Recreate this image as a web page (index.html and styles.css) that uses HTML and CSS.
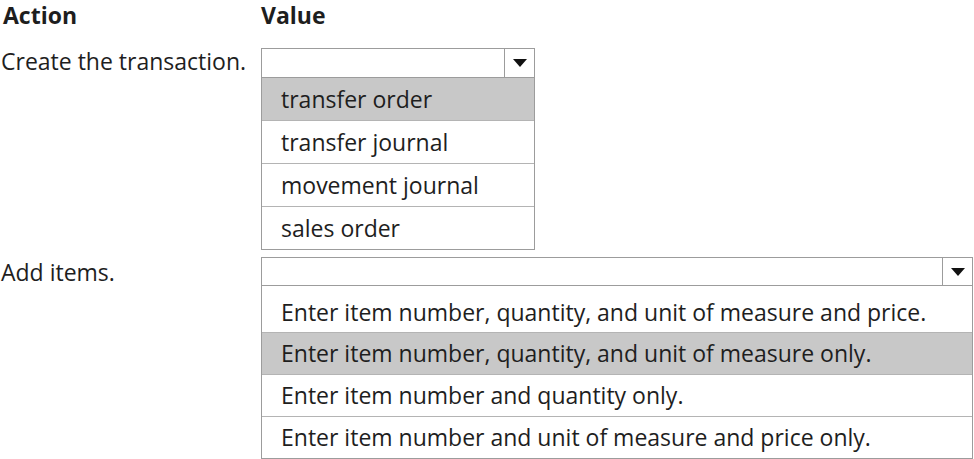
FILE: index.html
```html
<!DOCTYPE html>
<html lang="en">

<head>
    <meta charset="UTF-8">
    <title>Action / Value</title>
    <link rel="stylesheet" href="styles.css">
</head>

<body>

    <div class="row head">
        <div class="cell">Action</div>
        <div class="cell">Value</div>
    </div>

    <div class="row first">
        <div class="label">Create the transaction.</div>
        <div class="dropdown small">
            <div class="select">
                <span class="value"></span>
                <span class="arrow"></span>
            </div>
            <ul class="options">
                <li class="selected">transfer order</li>
                <li>transfer journal</li>
                <li>movement journal</li>
                <li>sales order</li>
            </ul>
        </div>
    </div>

    <div class="row second">
        <div class="label">Add items.</div>
        <div class="dropdown wide">
            <div class="select">
                <span class="value"></span>
                <span class="arrow"></span>
            </div>
            <ul class="options">
                <li class="top">Enter item number, quantity, and unit of measure and price.</li>
                <li class="selected">Enter item number, quantity, and unit of measure only.</li>
                <li>Enter item number and quantity only.</li>
                <li>Enter item number and unit of measure and price only.</li>
            </ul>
        </div>
    </div>

</body>

</html>
```

FILE: styles.css
```css
body {
    margin: 0;
    font-family: 'Open Sans', 'Noto Sans', sans-serif;
    font-size: 23px;
    color: #1e1e1e;
    background-color: #fff;
}

.row {
    display: grid;
    grid-template-columns: 261px 1fr;
    align-items: start;
}

.head {
    font-weight: bold;
    line-height: 30px;
    padding-left: 3px;
}

.head .cell:last-child {
    margin-left: -3px;
}

.first {
    margin-top: 18px;
}

.second {
    margin-top: 7px;
}

.label {
    line-height: 30px;
    padding-left: 1px;
}

.first .label {
    margin-top: -2px;
}

.dropdown {
    box-sizing: border-box;
}

.small {
    width: 274px;
}

.wide {
    width: 712px;
}

.select {
    display: flex;
    height: 30px;
    border: 1px solid #9c9c9c;
    box-sizing: border-box;
}

.select .value {
    flex: 1;
}

.select .arrow {
    width: 29px;
    border-left: 1px solid #9c9c9c;
    display: flex;
    align-items: center;
    justify-content: center;
}

.select .arrow::after {
    content: '';
    border-left: 7px solid transparent;
    border-right: 7px solid transparent;
    border-top: 8px solid #111;
}

.options {
    list-style: none;
    margin: 0;
    padding: 0;
    border: 1px solid #9c9c9c;
    border-top: none;
}

.options li {
    height: 42px;
    line-height: 42px;
    padding-left: 19px;
    border-top: 1px solid #b4b4b4;
    white-space: nowrap;
}

.options li:first-child {
    border-top: none;
}

.options li.selected {
    background-color: #c8c8c8;
}

.wide .select {
    height: 29px;
}

.wide .options li {
    height: 41px;
    line-height: 41px;
}

.wide .options li.top {
    height: 46px;
    line-height: 52px;
}
```
